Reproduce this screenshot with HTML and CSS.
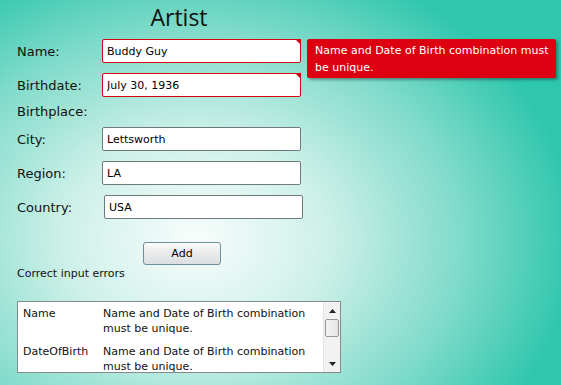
FILE: index.html
```html
<!DOCTYPE html>
<html lang="en">
<head>
  <meta charset="UTF-8" />
  <title>Artist</title>
  <link rel="stylesheet" href="styles.css">
</head>
<body>
  <div class="window">
    <div class="panel">
      <h1 class="title">Artist</h1>

      <!-- Artist form -->
      <div class="form">
        <label class="label">Name:</label>
        <div class="field invalid">
          <input type="text" value="Buddy Guy">
          <div class="tooltip">Name and Date of Birth combination must be unique.</div>
        </div>

        <label class="label">Birthdate:</label>
        <div class="field invalid">
          <input type="text" value="July 30, 1936">
        </div>

        <div class="label group">Birthplace:</div>

        <label class="label">City:</label>
        <div class="field"><input type="text" value="Lettsworth"></div>

        <label class="label">Region:</label>
        <div class="field"><input type="text" value="LA"></div>

        <label class="label">Country:</label>
        <div class="field shifted"><input type="text" value="USA"></div>
      </div>

      <div class="actions">
        <button class="add-button">Add</button>
      </div>

      <p class="status">Correct input errors</p>

      <!-- Error list -->
      <div class="error-list">
        <div class="rows">
          <div class="row">
            <span class="prop">Name</span>
            <span class="msg">Name and Date of Birth combination must be unique.</span>
          </div>
          <div class="row">
            <span class="prop">DateOfBirth</span>
            <span class="msg">Name and Date of Birth combination must be unique.</span>
          </div>
        </div>
        <div class="scrollbar">
          <div class="arrow">
            <svg width="7" height="4" viewBox="0 0 7 4"><path d="M0 4 L3.5 0 L7 4 Z" fill="#222"/></svg>
          </div>
          <div class="track"><div class="thumb"></div></div>
          <div class="arrow">
            <svg width="7" height="4" viewBox="0 0 7 4"><path d="M0 0 L3.5 4 L7 0 Z" fill="#222"/></svg>
          </div>
        </div>
      </div>
    </div>
  </div>
</body>
</html>
```

FILE: styles.css
```css
* {
  margin: 0;
  padding: 0;
  box-sizing: border-box;
}
html, body {
  height: 100%;
}
body {
  font-family: "DejaVu Sans", Verdana, sans-serif;
  color: #111;
  overflow: hidden;
}
/* Window background */
.window {
  width: 561px;
  height: 385px;
  background: radial-gradient(ellipse 380px 300px at 195px 240px, #f8fdfc 0%, #cdf0e8 35%, #80dbca 70%, #2fc6ae 100%);
  padding: 0 0 0 17px;
}
.panel {
  width: 324px;
}
.title {
  font-family: "Open Sans", "DejaVu Sans", sans-serif;
  font-weight: normal;
  font-size: 23px;
  line-height: 28px;
  text-align: center;
  padding-top: 3px;
  height: 39px;
}
/* Form grid */
.form {
  display: grid;
  grid-template-columns: 85px 199px;
  grid-template-rows: 24px 24px 10px 24px 24px 24px;
  row-gap: 10px;
  align-items: center;
}
.label {
  font-size: 13px;
}
.group {
  grid-column: 1 / span 2;
  line-height: 10px;
}
.field {
  position: relative;
  height: 24px;
}
.field.shifted {
  margin-left: 2px;
}
.field input {
  width: 199px;
  height: 24px;
  border: 1px solid #6f7a7e;
  border-radius: 2px;
  background: #fff;
  padding: 0 4px;
  font-family: "DejaVu Sans", Verdana, sans-serif;
  font-size: 11px;
  color: #000;
  outline: none;
}
.field.invalid input {
  border-color: #d4000f;
}
.field.invalid::after {
  content: "";
  position: absolute;
  top: 0;
  right: 0;
  border-top: 6px solid #d4000f;
  border-left: 6px solid transparent;
}
.tooltip {
  position: absolute;
  left: 205px;
  top: 0;
  width: 249px;
  height: 39px;
  background: #dd0011;
  color: #fff;
  font-size: 11px;
  line-height: 17px;
  padding: 3px 2px 3px 8px;
  border-radius: 2px;
  box-shadow: 2px 2px 3px rgba(0, 0, 0, 0.35);
}
/* Button */
.actions {
  padding: 23px 0 0 126px;
}
.add-button {
  width: 78px;
  height: 23px;
  border: 1px solid #6d8f9c;
  border-radius: 3px;
  background: linear-gradient(#fbfbfb, #e9eaeb 50%, #dcdee0);
  font-family: "DejaVu Sans", Verdana, sans-serif;
  font-size: 11px;
  color: #000;
}
.status {
  font-size: 11px;
  line-height: 14px;
  margin-top: 2px;
}
/* Error list */
.error-list {
  margin-top: 20px;
  height: 72px;
  width: 324px;
  border: 1px solid #848b8f;
  background: #fff;
  display: flex;
  overflow: hidden;
}
.rows {
  flex: 1;
  padding: 4px 0 0 5px;
}
.row {
  display: flex;
  font-size: 11px;
  line-height: 15px;
  margin-bottom: 8px;
}
.prop {
  width: 80px;
  flex-shrink: 0;
}
.msg {
  width: 210px;
}
.scrollbar {
  width: 17px;
  display: flex;
  flex-direction: column;
  background: #f2f2f2;
  border-left: 1px solid #e4e4e4;
}
.arrow {
  height: 17px;
  display: flex;
  align-items: center;
  justify-content: center;
}
.track {
  flex: 1;
}
.thumb {
  height: 18px;
  margin: 0 1px;
  border: 1px solid #979797;
  border-radius: 2px;
  background: linear-gradient(to right, #f3f3f3, #e4e4e4);
}
```
